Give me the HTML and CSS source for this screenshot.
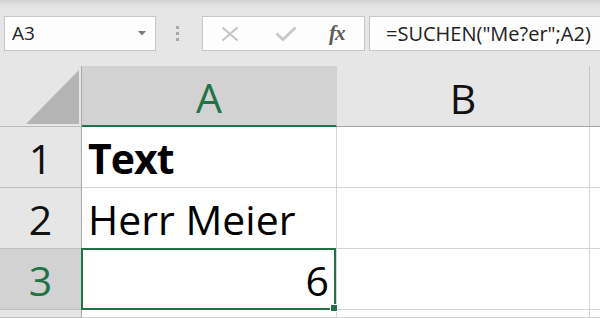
FILE: index.html
```html
<!DOCTYPE html>
<html>
<head>
<meta charset="utf-8">
<link rel="stylesheet" href="styles.css">
</head>
<body>
<div class="app">
  <div class="fbar">
    <div class="namebox">
      <span class="nb-text">A3</span>
      <svg class="nb-arrow" width="8" height="5" viewBox="0 0 8 5"><path d="M0 0H8L4 4.5Z" fill="#7a7a7a"/></svg>
    </div>
    <div class="grip"><i></i><i></i><i></i></div>
    <div class="btns">
      <svg class="ic-x" width="18" height="16" viewBox="0 0 18 16"><path d="M1.5 1.5L16.5 14.5M16.5 1.5L1.5 14.5" stroke="#c3c3c3" stroke-width="2" fill="none"/></svg>
      <svg class="ic-ok" width="22" height="16" viewBox="0 0 22 16"><path d="M1.5 7.5L8 13.5L20.5 1.5" stroke="#c8c8c8" stroke-width="3" fill="none"/></svg>
      <span class="fx">fx</span>
    </div>
    <div class="formula">=SUCHEN("Me?er";A2)</div>
  </div>
  <div class="sheet">
    <div class="corner"><svg width="53" height="54" viewBox="0 0 53 54"><path d="M53 0V54H0Z" fill="#b4b4b4"/></svg></div>
    <div class="ch sel">A</div>
    <div class="ch">B</div>
    <div class="ch last"></div>

    <div class="rh">1</div>
    <div class="cell bold">Text</div>
    <div class="cell"></div>
    <div class="cell last"></div>

    <div class="rh">2</div>
    <div class="cell">Herr Meier</div>
    <div class="cell"></div>
    <div class="cell last"></div>

    <div class="rh sel">3</div>
    <div class="cell num active">6<span class="handle"></span></div>
    <div class="cell"></div>
    <div class="cell last"></div>

    <div class="rh"></div>
    <div class="cell"></div>
    <div class="cell"></div>
    <div class="cell last"></div>
  </div>
</div>
</body>
</html>
```
FILE: styles.css
```css
* { box-sizing: border-box; }
html, body { margin: 0; padding: 0; }
body {
  width: 600px;
  height: 318px;
  overflow: hidden;
  background: #e6e6e6;
  font-family: "Open Sans", "Noto Sans", sans-serif;
}
.app { width: 600px; height: 318px; overflow: hidden; }

.fbar {
  height: 66px;
  padding-top: 16px;
  display: flex;
  align-items: flex-start;
  background: linear-gradient(#d2d2d2 0px, #e0e0e0 4px, #e6e6e6 8px, #e6e6e6 100%);
}
.namebox {
  margin-left: 4px;
  width: 152px;
  height: 35px;
  background: #fdfdfd;
  border: 1px solid #c6c6c6;
  display: flex;
  align-items: center;
  padding-left: 7px;
  padding-right: 9px;
}
.nb-text {
  flex: 1;
  font-size: 19px;
  color: #222;
  line-height: 1;
}
.nb-arrow { display: block; }
.grip {
  width: 46px;
  height: 35px;
  display: flex;
  flex-direction: column;
  align-items: center;
  justify-content: center;
  gap: 3px;
  padding-right: 4px;
}
.grip i {
  display: block;
  width: 3px;
  height: 3px;
  background: #a9a9a9;
}
.btns {
  width: 163px;
  height: 35px;
  background: #fdfdfd;
  border: 1px solid #c6c6c6;
  display: flex;
  align-items: center;
  padding-left: 18px;
}
.ic-x { display: block; margin-right: 36px; }
.ic-ok { display: block; margin-right: 32px; }
.fx {
  font-family: "Liberation Serif", "DejaVu Serif", serif;
  font-style: italic;
  font-weight: bold;
  font-size: 21px;
  color: #5a5a5a;
  letter-spacing: -1px;
}
.formula {
  margin-left: 4px;
  flex: 1;
  margin-right: -10px;
  height: 35px;
  background: #fdfdfd;
  border: 1px solid #c6c6c6;
  font-size: 20px;
  color: #222;
  display: flex;
  align-items: center;
  padding-left: 16px;
  white-space: nowrap;
}

.sheet {
  display: grid;
  grid-template-columns: 82px 255px 253px 1fr;
  grid-template-rows: 61px 61px 61px 61px 1fr;
  height: 252px;
  background: #fff;
}
.corner {
  background: #e6e6e6;
  border-right: 1px solid #a8a8a8;
  border-bottom: 1px solid #bcbcbc;
  padding: 4px 0 0 26px;
}
.corner svg { display: block; }
.ch {
  background: #e6e6e6;
  border-right: 1px solid #c6c6c6;
  border-bottom: 1px solid #a3a3a3;
  font-size: 41px;
  color: #111;
  display: flex;
  align-items: center;
  justify-content: center;
  line-height: 1;
  padding-top: 4px;
}
.ch.sel {
  background: #d2d2d2;
  color: #217346;
  border-right-color: #d2d2d2;
  border-bottom: 2px solid #217346;
}
.ch.last { border-right: none; }
.rh {
  background: #e6e6e6;
  border-right: 1px solid #a8a8a8;
  border-bottom: 1px solid #c0c0c0;
  font-size: 41px;
  color: #111;
  display: flex;
  align-items: center;
  justify-content: center;
  line-height: 1;
  padding-top: 3px;
}
.rh.sel {
  background: #d2d2d2;
  color: #217346;
}
.cell {
  position: relative;
  border-right: 1px solid #d4d4d4;
  border-bottom: 1px solid #d4d4d4;
  font-size: 41px;
  color: #000;
  display: flex;
  align-items: center;
  line-height: 1;
  padding: 3px 7px 0 6px;
  white-space: nowrap;
}
.cell.last { border-right: none; }
.cell.bold { font-weight: bold; letter-spacing: -1px; }
.cell.num { justify-content: flex-end; }
.cell.active::after {
  content: "";
  position: absolute;
  top: -1px;
  left: -1px;
  right: 0;
  bottom: -1px;
  border: 2px solid #217346;
  pointer-events: none;
}
.handle {
  position: absolute;
  right: -2px;
  bottom: -3px;
  width: 8px;
  height: 8px;
  background: #217346;
  border: 1px solid #fff;
  z-index: 2;
}
```
